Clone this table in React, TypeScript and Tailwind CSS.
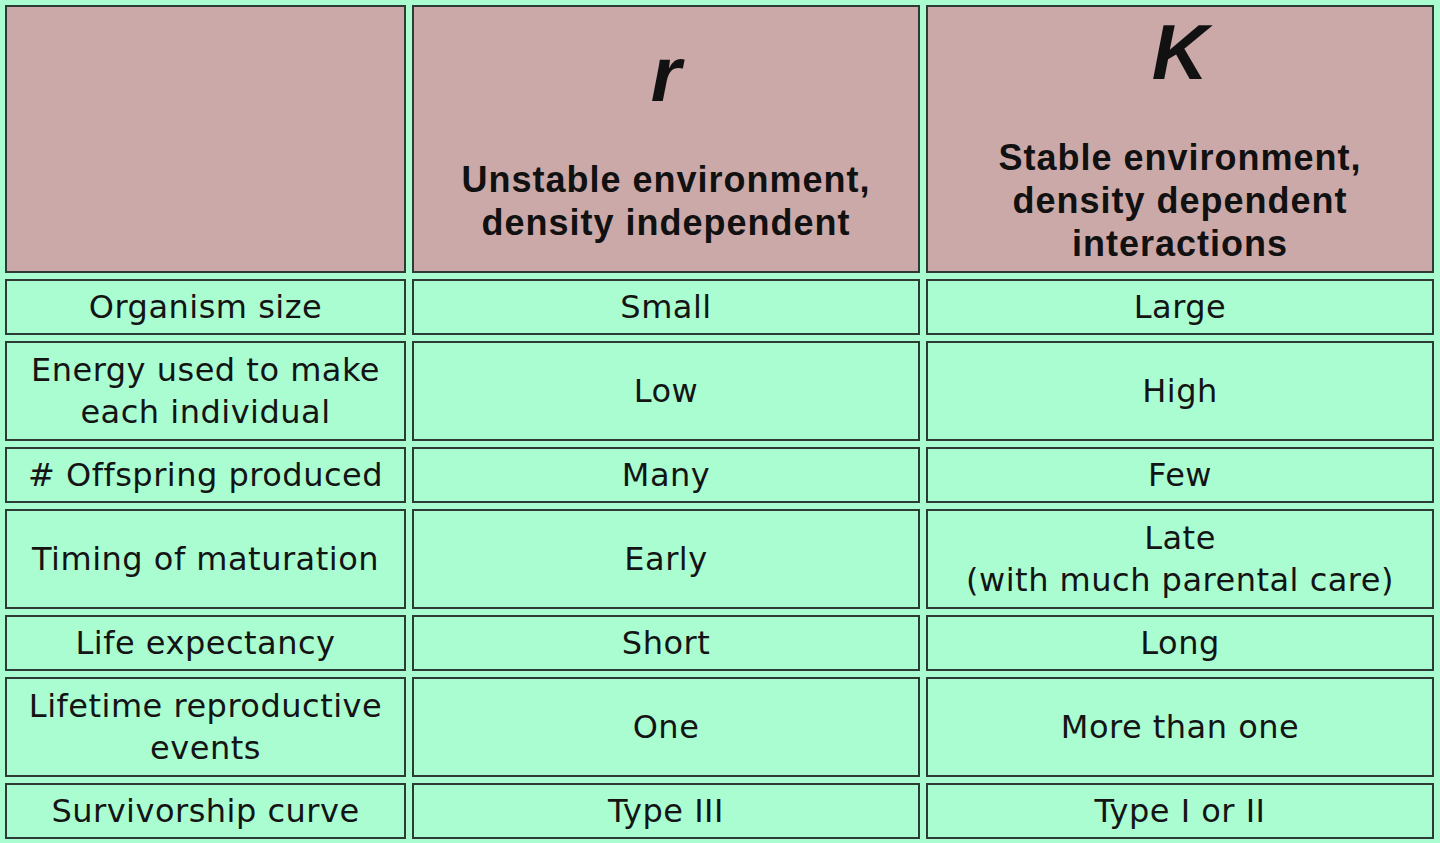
import React from 'react';

interface Row {
  label: string[];
  r: string[];
  k: string[];
  tall?: boolean;
}

const rows: Row[] = [
  { label: ['Organism size'], r: ['Small'], k: ['Large'] },
  { label: ['Energy used to make', 'each individual'], r: ['Low'], k: ['High'], tall: true },
  { label: ['# Offspring produced'], r: ['Many'], k: ['Few'] },
  { label: ['Timing of maturation'], r: ['Early'], k: ['Late', '(with much parental care)'], tall: true },
  { label: ['Life expectancy'], r: ['Short'], k: ['Long'] },
  { label: ['Lifetime reproductive', 'events'], r: ['One'], k: ['More than one'], tall: true },
  { label: ['Survivorship curve'], r: ['Type III'], k: ['Type I or II'] },
];

const Lines = ({ lines }: { lines: string[] }) => (
  <>
    {lines.map((l, i) => (
      <React.Fragment key={i}>
        {i > 0 && <br />}
        {l}
      </React.Fragment>
    ))}
  </>
);

const Cell = ({ lines, tall }: { lines: string[]; tall?: boolean }) => (
  <div
    className={`flex items-center justify-center border-2 border-[#2e3a34] bg-[#a9fdd0] text-center text-[32px] leading-[42px] tracking-[0.5px] text-[#141414] font-['DejaVu_Sans',sans-serif] ${
      tall ? 'h-[100px]' : 'h-[56px]'
    }`}
  >
    <div>
      <Lines lines={lines} />
    </div>
  </div>
);

const HeadCell = ({ letter, lines }: { letter: string; lines: string[] }) => (
  <div className="flex h-[268px] flex-col items-center justify-center border-2 border-[#2e3a34] bg-[#cca9a9] text-center text-[#111] font-['Liberation_Sans',Arial,sans-serif]">
    <div className="text-[78px] font-bold italic leading-none">{letter}</div>
    <div className="mt-[45px] text-[36px] font-bold leading-[43px] tracking-[1px]">
      <Lines lines={lines} />
    </div>
  </div>
);

export default function App() {
  return (
    <div className="min-h-[843px] w-[1440px] bg-[#a9fdd0] pl-[5px] pt-[5px]">
      <div className="grid grid-cols-[401px_508px_508px] gap-[6px]">
        <div className="h-[268px] border-2 border-[#2e3a34] bg-[#cca9a9]" />
        <HeadCell letter="r" lines={['Unstable environment,', 'density independent']} />
        <HeadCell letter="K" lines={['Stable environment,', 'density dependent', 'interactions']} />
        {rows.map((row, i) => (
          <React.Fragment key={i}>
            <Cell lines={row.label} tall={row.tall} />
            <Cell lines={row.r} tall={row.tall} />
            <Cell lines={row.k} tall={row.tall} />
          </React.Fragment>
        ))}
      </div>
    </div>
  );
}
